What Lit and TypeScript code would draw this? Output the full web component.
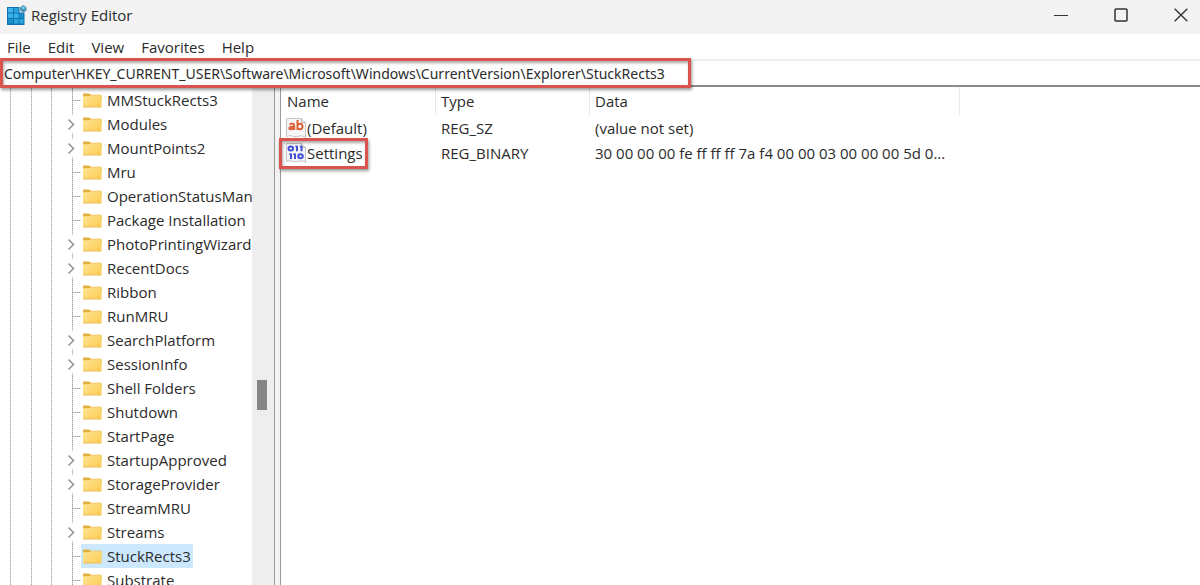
import { LitElement, html, css, svg, nothing } from "lit";
import { customElement, state } from "lit/decorators.js";
import { classMap } from "lit/directives/class-map.js";

interface Key {
  name: string;
  expandable?: boolean;
}

interface Value {
  name: string;
  type: string;
  data: string;
  binary: boolean;
  marked?: boolean;
}

const KEYS: Key[] = [
  { name: "MMStuckRects3" },
  { name: "Modules", expandable: true },
  { name: "MountPoints2", expandable: true },
  { name: "Mru" },
  { name: "OperationStatusManager" },
  { name: "Package Installation" },
  { name: "PhotoPrintingWizard", expandable: true },
  { name: "RecentDocs", expandable: true },
  { name: "Ribbon" },
  { name: "RunMRU" },
  { name: "SearchPlatform", expandable: true },
  { name: "SessionInfo", expandable: true },
  { name: "Shell Folders" },
  { name: "Shutdown" },
  { name: "StartPage" },
  { name: "StartupApproved", expandable: true },
  { name: "StorageProvider", expandable: true },
  { name: "StreamMRU" },
  { name: "Streams", expandable: true },
  { name: "StuckRects3" },
  { name: "Substrate" },
];

const VALUES: Value[] = [
  { name: "(Default)", type: "REG_SZ", data: "(value not set)", binary: false },
  {
    name: "Settings",
    type: "REG_BINARY",
    data: "30 00 00 00 fe ff ff ff 7a f4 00 00 03 00 00 00 5d 0...",
    binary: true,
    marked: true,
  },
];

const PATH =
  "Computer\\HKEY_CURRENT_USER\\Software\\Microsoft\\Windows\\CurrentVersion\\Explorer\\StuckRects3";

const appIcon = html`<svg class="app-icon" viewBox="0 0 20 20" aria-hidden="true">
  <path d="M0 2h12.500v5.500h5V20H0z" fill="#1173b0" />
  <path d="M1 3h5v4.500H1z" fill="#3cb4e6" />
  <path d="M7 3h4.500v4.500H7z" fill="#2aa5dd" />
  <path d="M1 8.500h5v4.500H1zM7 8.500h4.500v4.500H7z" fill="#35b3ea" />
  <path d="M12.500 8.500h4v4.500h-4z" fill="#1c8fca" />
  <path d="M1 14h5v4.500H1z" fill="#1c8fca" />
  <path d="M7 14h4.500v4.500H7zM12.500 14h4v4.500h-4z" fill="#2aa5dd" />
  <path d="M13 2.200 16.200 0l3.300 2.200v3.300l-3.300 2.200L13 5.500z" fill="#4a94ba" />
  <path d="m14 2.700 2.200-1.400 2.300 1.400-2.300 1.500z" fill="#8ccbe6" />
</svg>`;

const folderIcon = html`<svg class="folder" viewBox="0 0 20 17" aria-hidden="true">
  <defs>
    <linearGradient id="f" x1="0" y1="0" x2="1" y2="1">
      <stop offset="0" stop-color="#ffe596" />
      <stop offset="1" stop-color="#fbcb50" />
    </linearGradient>
  </defs>
  <path d="M0 1.500Q0 1 .5 1H6.500L8.500 2.500H19q.5 0 .5.500V8H0z" fill="#e0b03c" />
  <path d="M0 4h6.500l2-1H19.500V15q0 .7-.7.700H.7Q0 15.700 0 15z" fill="url(#f)" />
  <path d="M.3 15.300h19" stroke="#e8bb50" stroke-width=".8" />
</svg>`;

const page = svg`
  <path d="M.5 .5h15l4 4V19.500q-3-2.500-6-1.500t-6 .5q-3-2-7 0z" fill="#f6f6f8" stroke="#c4c4c4" />
  <path d="M15.500 .5v4h4" fill="#e8e8e8" stroke="#b9b9b9" />`;

const stringIcon = html`<svg class="value-icon" viewBox="0 0 20 20" aria-hidden="true">
  ${page}
  <g fill="none" stroke="#dd6038" stroke-width="2">
    <path d="M3.500 6.300Q8.200 4.500 8.200 7.500V12M8.200 8.700Q3.300 8.300 3.300 10.300T8.200 10" />
    <path d="M11.500 2V12M11.500 8q0-2.300 2.500-2.300T16.500 8.500t-2.500 2.700T11.500 9.500" />
  </g>
</svg>`;

const binaryIcon = html`<svg class="value-icon" viewBox="0 0 20 20" aria-hidden="true">
  ${page}
  <g fill="none" stroke="#4350d2" stroke-width="2">
    <ellipse cx="4.800" cy="5.500" rx="2.300" ry="2" />
    <path d="M11 2.700v5.500M15.500 2.700v5.500M5 10.500v5.500M9 10.500v5.500" />
    <path d="M9.300 3.500h1.500M13.800 3.500h1.500M3.300 11.300h1.500M7.300 11.300h1.500" stroke-width="1.500" />
    <ellipse cx="14.500" cy="13.200" rx="2.300" ry="2" />
  </g>
</svg>`;

@customElement("app-root")
export class AppRoot extends LitElement {
  @state() private selected = "StuckRects3";

  static styles = css`
    :host {
      display: flex;
      flex-direction: column;
      height: 100vh;
      overflow: hidden;
      background: #fff;
      color: #2b2b2b;
      font: 15px/24px "Open Sans", "Noto Sans", sans-serif;
    }
    * {
      box-sizing: border-box;
    }
    button,
    input {
      font: inherit;
      color: inherit;
      border: 0;
      margin: 0;
      padding: 0;
      background: none;
    }
    .title-bar {
      display: flex;
      align-items: center;
      flex: none;
      height: 34px;
      padding: 0 0 4px 7px;
      background: #f3f3f3;
    }
    .app-icon {
      width: 20px;
      height: 20px;
      margin-right: 4px;
    }
    .title {
      flex: 1;
      margin: 0;
      font: inherit;
    }
    .controls {
      display: flex;
    }
    .control {
      display: grid;
      place-items: center;
      width: 60px;
      height: 30px;
    }
    .control:last-child {
      margin-right: -11px;
    }
    .control svg {
      width: 14px;
      height: 14px;
      fill: none;
      stroke: #333;
    }
    .menu {
      display: flex;
      flex: none;
      gap: 17px;
      height: 25px;
      padding: 1px 7px 0;
    }
    .address {
      position: relative;
      flex: none;
      height: 28px;
      border-top: 2px solid #eee;
      border-bottom: 2px solid #8c8c8c;
    }
    .path {
      display: block;
      width: 100%;
      height: 24px;
      padding: 1px 4px 0;
      outline: 0;
      font-family: "Noto Sans", sans-serif;
      font-size: 14px;
    }
    .mark {
      position: absolute;
      pointer-events: none;
      border: 3px solid #d9534f;
      box-shadow: 1px 2px 3px #0006, inset 1px 2px 3px #0005;
    }
    .address .mark {
      z-index: 1;
      top: -3px;
      left: 0;
      width: 691px;
      height: 30px;
    }
    .main {
      display: grid;
      grid-template-columns: 252px 22px 7px minmax(0, 1fr);
      flex: 1;
      min-height: 0;
    }
    .tree {
      margin: 0;
      padding: 1px 0 0;
      list-style: none;
      overflow: hidden;
    }
    .key {
      display: grid;
      grid-template-columns: 10px 21px 20px 11px 19px auto;
      height: 24px;
      white-space: nowrap;
      cursor: default;
    }
    .guide {
      border-left: 1px solid transparent;
      background: repeating-linear-gradient(#a6a6a6 0 1px, #e4e4e4 1px 2px) border-box 0 0 / 1px 100%
        no-repeat;
    }
    .guide:first-of-type {
      grid-column: 2;
    }
    .branch {
      display: grid;
      align-items: center;
      width: 19px;
      height: 24px;
    }
    .branch svg {
      width: 19px;
      height: 24px;
      fill: none;
    }
    .stem {
      grid-column: 5;
    }
    .label {
      display: flex;
      align-items: center;
      justify-self: start;
      padding: 0 2px;
    }
    .label.selected {
      background: #cce8ff;
    }
    .folder {
      width: 19px;
      height: 17px;
      margin-right: 5px;
    }
    .scrollbar {
      display: grid;
      grid-template-rows: 293fr 30fr 175fr;
      background: #eee;
    }
    .thumb {
      grid-row: 2;
      width: 10px;
      margin-left: 5px;
      background: #858585;
    }
    .splitter {
      border: solid #999;
      border-width: 0 1px;
      background: #f3f3f3;
    }
    .values {
      border-collapse: separate;
      border-spacing: 0;
      table-layout: fixed;
      width: 679px;
    }
    .name {
      width: 155px;
    }
    .type {
      width: 154px;
    }
    th,
    td {
      padding: 0 0 0 5px;
      text-align: left;
      font-weight: 400;
      height: 25px;
      white-space: nowrap;
    }
    th {
      height: 28px;
      border-right: 1px solid #e8e8e8;
    }
    .name {
      padding-left: 6px;
    }
    .entry {
      position: relative;
      display: flex;
      align-items: center;
      gap: 1px;
      width: max-content;
    }
    .entry .mark {
      inset: -3px -5px -4px -7px;
    }
    .value-icon {
      width: 20px;
      height: 20px;
    }
  `;

  private renderKey(key: Key) {
    const chosen = key.name === this.selected;
    return html`<li
      class="key"
      role="treeitem"
      aria-selected=${chosen}
      @click=${() => (this.selected = key.name)}
    >
      <span class="guide"></span><span class="guide"></span><span class="guide"></span>
      ${key.expandable
        ? html`<button class="branch stem" aria-label="Expand ${key.name}">
            <svg viewBox="0 0 19 24" aria-hidden="true">
              <path d="M10.500 0v4M10.500 21v3" stroke="#aaa" stroke-dasharray="1 1" />
              <path d="m6.500 7.500 5 5-5 5" stroke="#8c8c8c" stroke-width="1.400" />
            </svg>
          </button>`
        : html`<span class="branch stem">
            <svg viewBox="0 0 19 24" aria-hidden="true">
              <path d="M10.500 0v24M11 12.500h8" stroke="#ddd" />
              <path d="M10.500 0v24M11 12.500h8" stroke="#999" stroke-dasharray="1 1" />
            </svg>
          </span>`}
      <span class=${classMap({ label: true, selected: chosen })}>${folderIcon}${key.name}</span>
    </li>`;
  }

  render() {
    return html`
      <header class="title-bar">
        ${appIcon}
        <h1 class="title">Registry Editor</h1>
        <div class="controls">
          <button class="control" aria-label="Minimize">
            <svg viewBox="0 0 14 14"><path d="M0 7.500h14" /></svg>
          </button>
          <button class="control" aria-label="Maximize">
            <svg viewBox="0 0 14 14">
              <rect x="1" y="1" width="12" height="12" rx="1" stroke-width="1.500" />
            </svg>
          </button>
          <button class="control" aria-label="Close">
            <svg viewBox="0 0 14 14"><path d="m.7.7 12.600 12.600M13.300.7.7 13.300" stroke-width="1.400" /></svg>
          </button>
        </div>
      </header>
      <nav class="menu">
        ${["File", "Edit", "View", "Favorites", "Help"].map((m) => html`<button>${m}</button>`)}
      </nav>
      <div class="address">
        <input class="path" aria-label="Key path" .value=${PATH} />
        <span class="mark"></span>
      </div>
      <main class="main">
        <ul class="tree" role="tree">
          ${KEYS.map((key) => this.renderKey(key))}
        </ul>
        <div class="scrollbar"><div class="thumb"></div></div>
        <div class="splitter"></div>
        <section>
          <table class="values">
            <thead>
              <tr>
                <th class="name">Name</th>
                <th class="type">Type</th>
                <th>Data</th>
              </tr>
            </thead>
            <tbody>
              ${VALUES.map(
                (v) => html`<tr>
                  <td>
                    <span class="entry">
                      ${v.binary ? binaryIcon : stringIcon}${v.name}
                      ${v.marked ? html`<span class="mark"></span>` : nothing}
                    </span>
                  </td>
                  <td>${v.type}</td>
                  <td>${v.data}</td>
                </tr>`
              )}
            </tbody>
          </table>
        </section>
      </main>
    `;
  }
}
